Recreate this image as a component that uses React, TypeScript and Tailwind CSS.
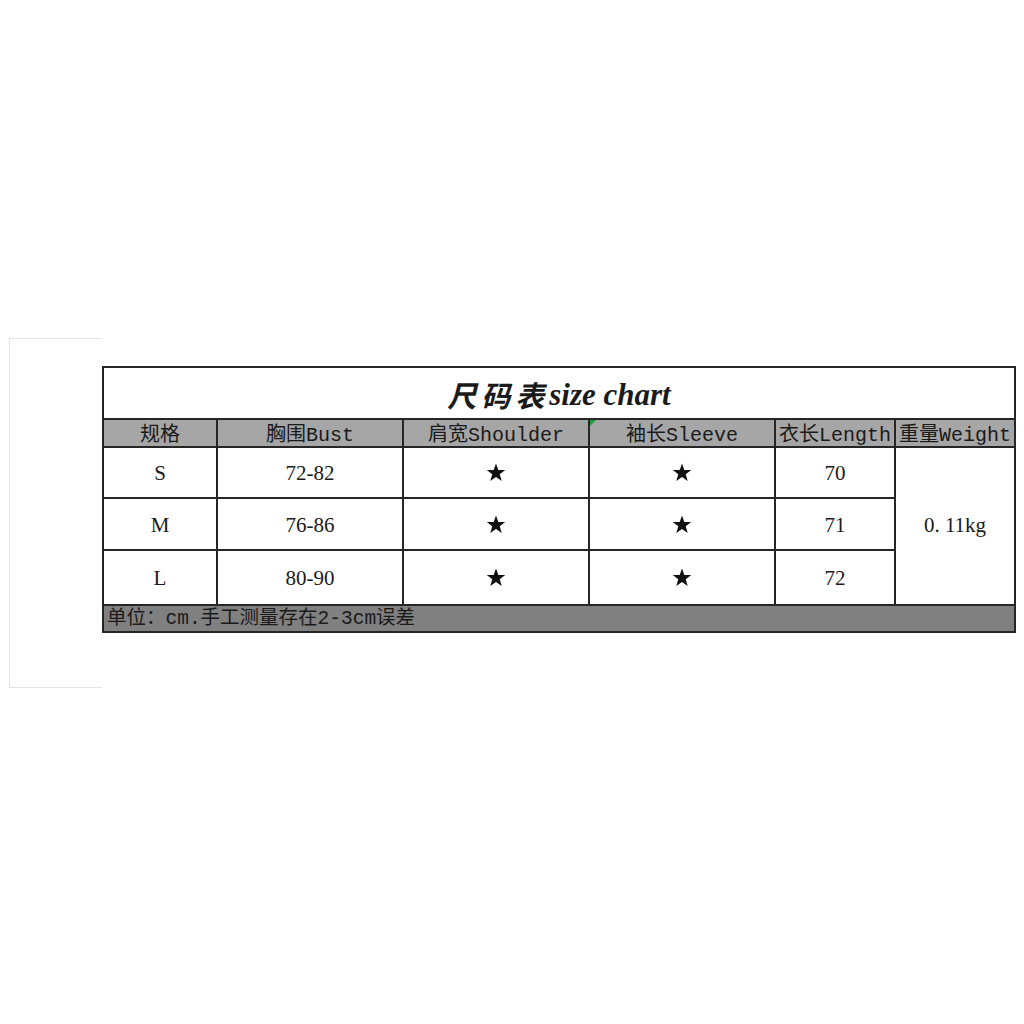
import React from "react";

const mono = "font-['Liberation_Mono','Noto_Sans_CJK_SC',monospace]";
const serif = "font-['Liberation_Serif','Noto_Sans_CJK_SC',serif]";

function Star() {
  return (
    <svg width="20" height="19" viewBox="0 0 24 23" aria-hidden="true">
      <polygon
        points="12,0.5 14.8,8.4 23.2,8.6 16.5,13.7 18.9,21.8 12,17 5.1,21.8 7.5,13.7 0.8,8.6 9.2,8.4"
        fill="#111"
      />
    </svg>
  );
}

export default function App() {
  const headers = ["规格", "胸围Bust", "肩宽Shoulder", "袖长Sleeve", "衣长Length", "重量Weight"];
  const rows = [
    ["S", "72-82", "70"],
    ["M", "76-86", "71"],
    ["L", "80-90", "72"],
  ];
  return (
    <div className="w-[1024px] h-[1024px] bg-white text-[#1a1a1a] overflow-hidden">
      <div className="flex items-start pt-[338px] pl-[9px]">
        <div className="w-[93px] h-[350px] border-l border-t border-b border-[#e4e4e4] shrink-0" />
        <div className="mt-[28px] grid grid-cols-[112px_184px_184px_184px_118px_118px] grid-rows-[50px_26px_49px_50px_53px_25px] gap-[2px] p-[2px] bg-[#262626] w-[914px]">
          <div className="col-span-6 bg-white flex items-center justify-center pt-[2px]">
            <span className="font-['Noto_Sans_CJK_SC',sans-serif] font-bold text-[29px] tracking-[5px] italic leading-none">尺码表</span>
            <span className="font-['Liberation_Serif',serif] italic font-semibold text-[31px] leading-none">size chart</span>
          </div>
          {headers.map((h, i) => (
            <div
              key={h}
              className={`relative bg-[#a6a6a6] flex items-center justify-center pt-[5px] text-[20px] leading-none whitespace-nowrap ${mono}`}
            >
              {i === 3 && (
                <span className="absolute left-0 top-0 w-0 h-0 border-t-[6px] border-r-[6px] border-t-[#1f9e3a] border-r-transparent" />
              )}
              {h}
            </div>
          ))}
          {rows.map((r, ri) => (
            <React.Fragment key={r[0]}>
              <div className={`bg-white flex items-center justify-center pt-[3px] text-[21px] ${serif}`}>{r[0]}</div>
              <div className={`bg-white flex items-center justify-center pt-[3px] text-[21px] ${serif}`}>{r[1]}</div>
              <div className="bg-white flex items-center justify-center"><Star /></div>
              <div className="bg-white flex items-center justify-center"><Star /></div>
              <div className={`bg-white flex items-center justify-center pt-[3px] text-[21px] ${serif}`}>{r[2]}</div>
              {ri === 0 && (
                <div className={`row-span-3 bg-white flex items-center justify-center text-[21px] ${serif}`}>0. 11kg</div>
              )}
            </React.Fragment>
          ))}
          <div className={`col-span-6 bg-[#808080] flex items-center pl-[3px] pt-[3px] text-[19.5px] leading-none whitespace-nowrap ${mono}`}>
            单位：cm.手工测量存在2-3cm误差
          </div>
        </div>
      </div>
    </div>
  );
}
